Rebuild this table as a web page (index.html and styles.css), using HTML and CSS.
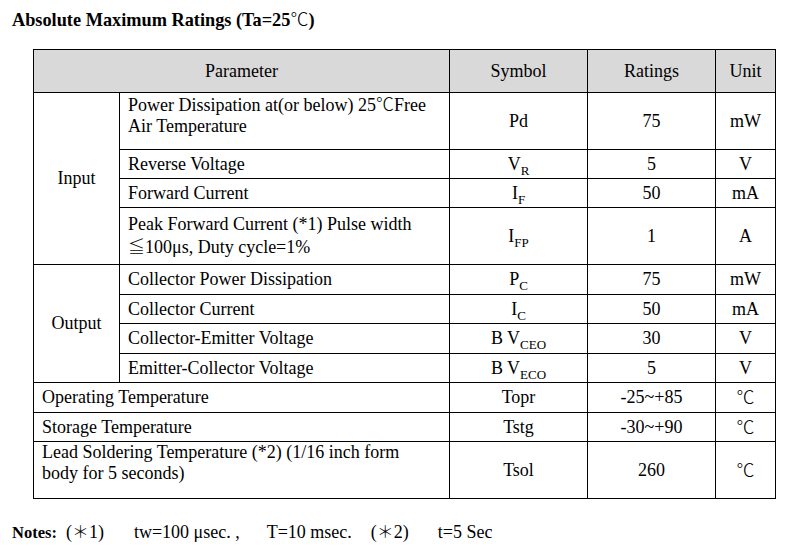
FILE: index.html
```html
<!DOCTYPE html>
<html>
<head>
<meta charset="utf-8">
<link rel="stylesheet" href="styles.css">
</head>
<body>
<h1 class="title">Absolute Maximum Ratings (Ta=25<span class="deg">℃</span>)</h1>
<table class="ratings">
  <colgroup>
    <col class="c-group"><col class="c-param"><col class="c-sym"><col class="c-val"><col class="c-unit">
  </colgroup>
  <thead>
    <tr class="h-head">
      <th colspan="2">Parameter</th>
      <th>Symbol</th>
      <th>Ratings</th>
      <th>Unit</th>
    </tr>
  </thead>
  <tbody>
    <tr class="h-dbl">
      <td rowspan="4" class="group">Input</td>
      <td class="param top">Power Dissipation at(or below) 25<span class="deg">℃</span>Free<br>Air Temperature</td>
      <td class="sym">Pd</td>
      <td class="val">75</td>
      <td class="unit">mW</td>
    </tr>
    <tr class="h-29">
      <td class="param">Reverse Voltage</td>
      <td class="sym">V<sub>R</sub></td>
      <td class="val">5</td>
      <td class="unit">V</td>
    </tr>
    <tr class="h-29">
      <td class="param">Forward Current</td>
      <td class="sym">I<sub>F</sub></td>
      <td class="val">50</td>
      <td class="unit">mA</td>
    </tr>
    <tr class="h-dbl">
      <td class="param">Peak Forward Current (*1) Pulse width<br><span class="cjk">≦</span>100μs, Duty cycle=1%</td>
      <td class="sym">I<sub>FP</sub></td>
      <td class="val">1</td>
      <td class="unit">A</td>
    </tr>
    <tr class="h-30">
      <td rowspan="4" class="group">Output</td>
      <td class="param">Collector Power Dissipation</td>
      <td class="sym">P<sub>C</sub></td>
      <td class="val">75</td>
      <td class="unit">mW</td>
    </tr>
    <tr class="h-29">
      <td class="param">Collector Current</td>
      <td class="sym">I<sub>C</sub></td>
      <td class="val">50</td>
      <td class="unit">mA</td>
    </tr>
    <tr class="h-30">
      <td class="param">Collector-Emitter Voltage</td>
      <td class="sym">B V<sub>CEO</sub></td>
      <td class="val">30</td>
      <td class="unit">V</td>
    </tr>
    <tr class="h-29">
      <td class="param">Emitter-Collector Voltage</td>
      <td class="sym">B V<sub>ECO</sub></td>
      <td class="val">5</td>
      <td class="unit">V</td>
    </tr>
    <tr class="h-30">
      <td colspan="2" class="param">Operating Temperature</td>
      <td class="sym">Topr</td>
      <td class="val">-25~+85</td>
      <td class="unit"><span class="deg big">℃</span></td>
    </tr>
    <tr class="h-29">
      <td colspan="2" class="param">Storage Temperature</td>
      <td class="sym">Tstg</td>
      <td class="val">-30~+90</td>
      <td class="unit"><span class="deg big">℃</span></td>
    </tr>
    <tr class="h-dbl">
      <td colspan="2" class="param top">Lead Soldering Temperature (*2) (1/16 inch form<br>body for 5 seconds)</td>
      <td class="sym">Tsol</td>
      <td class="val">260</td>
      <td class="unit"><span class="deg big">℃</span></td>
    </tr>
  </tbody>
</table>
<p class="notes"><b class="nlabel">Notes:</b>(<span class="cjk">＊</span>1)<span class="gap-a"></span>tw=100 μsec. ,<span class="gap-b"></span>T=10 msec.<span class="gap-c"></span>(<span class="cjk">＊</span>2)<span class="gap-d"></span>t=5 Sec</p>
</body>
</html>
```

FILE: styles.css
```css
html, body {
  margin: 0;
  padding: 0;
  background: #ffffff;
}
body {
  font-family: "Liberation Serif", "Noto Sans CJK SC", serif;
  color: #000000;
  font-size: 18px;
  padding: 8px 0 0 12px;
}
.title {
  margin: 0;
  font-size: 18.3px;
  line-height: 20px;
  font-weight: bold;
  height: 41px;
}
.deg, .cjk {
  font-family: "Noto Sans CJK SC", sans-serif;
  font-weight: 300;
}
.cjk {
  font-size: 17px;
}
.title .deg {
  font-size: 18px;
}
.deg.big {
  font-size: 18px;
}
.ratings {
  border-collapse: collapse;
  margin-left: 21px;
  width: 743px;
  table-layout: fixed;
  line-height: 21px;
}
.c-group { width: 86px; }
.c-param { width: 330px; }
.c-sym { width: 138px; }
.c-val { width: 128px; }
.c-unit { width: 60px; }
.ratings th, .ratings td {
  border: 1px solid #000000;
  padding: 0 8px;
  font-weight: normal;
  vertical-align: middle;
}
.ratings th {
  background: #d9d9d9;
  text-align: center;
}
.h-head { height: 43px; }
.h-dbl { height: 57px; }
.h-29 { height: 29px; }
.h-30 { height: 30px; }
.group { text-align: center; }
.param { text-align: left; }
.param.top { vertical-align: top; }
.sym, .val, .unit { text-align: center; padding: 0 2px; }
sub {
  font-size: 13px;
  line-height: 0;
  vertical-align: -5px;
}
.notes {
  margin: 22px 0 0 0;
  line-height: 20px;
  font-size: 18px;
}
.nlabel {
  font-size: 16.5px;
  margin-right: 9px;
}
.gap-a { display: inline-block; width: 30px; }
.gap-b { display: inline-block; width: 27px; }
.gap-c { display: inline-block; width: 19px; }
.gap-d { display: inline-block; width: 29px; }
```
